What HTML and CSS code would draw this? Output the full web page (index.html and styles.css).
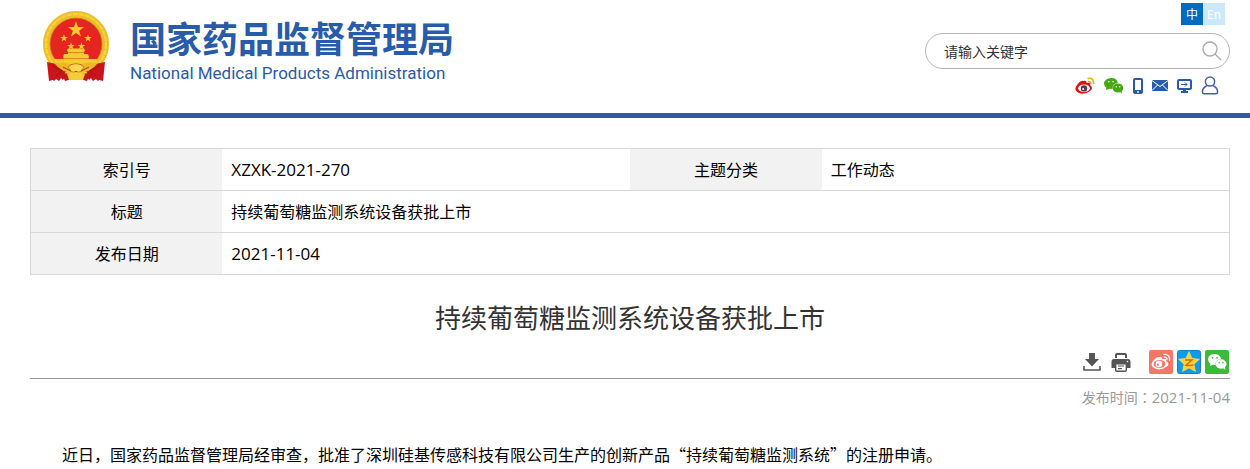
FILE: index.html
```
<!DOCTYPE html>
<html lang="zh-CN">
<head>
<meta charset="utf-8">
<title>持续葡萄糖监测系统设备获批上市</title>
<link rel="stylesheet" href="styles.css">
</head>
<body>
<header class="site-header">
  <a class="brand" href="#">
    <svg class="emblem" viewBox="0 0 68 74" aria-hidden="true">
      <path d="M9 51L27 60L21 70L17 66L12 71L9 68Q10 58 9 51ZM59 51L41 60L47 70L51 66L56 71L59 68Q58 58 59 51Z" fill="#c3141b"/>
      <circle cx="34" cy="34" r="29.500" fill="#e52620" stroke="#efbd25" stroke-width="7"/>
      <circle cx="34" cy="34" r="30" fill="none" stroke="#f8d444" stroke-width="2" stroke-dasharray="5 1"/>
      <circle cx="34" cy="34" r="26" fill="none" stroke="#c8841a" stroke-width=".7"/>
      <g fill="#f3cd32">
        <path id="star" d="M34 11L35.900 17L42 17L37.100 20.700L39 26.600L34 23L29 26.600L30.900 20.700L26 17L32.100 17Z"/>
        <use href="#star" transform="translate(6 19) scale(.47)"/>
        <use href="#star" transform="translate(30 19) scale(.47)"/>
        <use href="#star" transform="translate(13 27) scale(.47)"/>
        <use href="#star" transform="translate(23.500 27) scale(.47)"/>
        <path d="M26 38.500H42L43 40.500L42 42V44H46L47 47L46 49H56L54 54H14L12 49H22L21 47L22 44H26V42L25 40.500Z"/>
      </g>
      <path d="M26 42.500H42M21 48.500H47" stroke="#d8781b" stroke-width=".8"/>
      <path d="M5 52L20 55L25 60L17 71L14 69L7 71ZM63 52L48 55L43 60L51 71L54 69L61 71Z" fill="#cb151b"/>
      <path d="M12 53Q25 51 34 57Q43 51 56 53Q47 64 34 63Q21 64 12 53Z" fill="#edb824"/>
      <path d="M26 57Q34 50 42 57L38 62H30Z" fill="#fbd94c" stroke="#ba6919" stroke-width=".7"/>
      <path d="M19 62Q27 66 34 61Q41 66 49 62L45 71Q34 67 23 71Z" fill="#c8141b"/>
      <path d="M25 64Q34 60 43 64L41 70H27Z" fill="#f5cd39"/>
      <path d="M10 56L20 61L14 66M58 56L48 61L54 66M21 57L29 61M47 57L39 61" fill="none" stroke="#8f1015" stroke-width=".8"/>
    </svg>
    <span class="brand-text">
      <span class="brand-zh">国家药品监督管理局</span>
      <span class="brand-en">National Medical Products Administration</span>
    </span>
  </a>
  <div class="tools">
    <nav class="languages" aria-label="语言">
      <a class="language language-active" href="#">中</a>
      <a class="language" href="#">En</a>
    </nav>
    <form class="search">
      <input class="search-input" type="text" placeholder="请输入关键字" aria-label="请输入关键字">
      <button class="search-button" type="button" aria-label="搜索">
        <svg width="22" height="22" viewBox="0 0 22 22" fill="none" stroke="#aaa" stroke-width="1.300"><circle cx="9" cy="9" r="7"/><path d="M14 14L20 20"/></svg>
      </button>
    </form>
    <nav class="channels" aria-label="渠道">
      <a href="#" aria-label="微博"><svg width="20" height="18" viewBox="0 0 20 18"><path d="M8.500 4Q12 3 11.500 6Q16 5 15 8Q19 11 15 14Q10 18 4 16Q-2 13 2 8Q6 3 8.500 4Z" fill="#e60d12"/><ellipse cx="9" cy="11.300" rx="5.800" ry="3.900" fill="#fff"/><circle cx="9" cy="11.400" r="3.200" fill="#444"/><circle cx="8.200" cy="12" r="1" fill="#fff"/><path d="M12.500 1.500Q19 0 18.500 7M13 4.500Q16 4 15.700 7" fill="none" stroke="#f1ac12" stroke-width="1.600"/></svg></a>
      <a href="#" aria-label="微信"><svg width="20" height="18" viewBox="0 0 20 18"><path d="M7.500 1C3 1 0 4 0 6.500Q0 9 2.300 10.700L2 13L5.600 11.700L8.500 12Q8 7 13.800 6Q13 1 7.500 1Z" fill="#47a812"/><ellipse cx="14" cy="11" rx="5.300" ry="4.500" fill="#47a812"/><path d="M15 14L18 16.500L17.500 13Z" fill="#47a812"/><g fill="#fff"><circle cx="4.800" cy="4.700" r=".8"/><circle cx="9.100" cy="4.700" r=".8"/><circle cx="12.300" cy="9.800" r=".7"/><circle cx="15.700" cy="9.800" r=".7"/></g></svg></a>
      <a href="#" aria-label="移动版"><svg width="10" height="16" viewBox="0 0 10 16"><rect width="10" height="16" rx="2" fill="#285caa"/><path d="M2 2H8V12H2Z" fill="#fff"/><circle cx="5" cy="14" r=".9" fill="#fff"/></svg></a>
      <a href="#" aria-label="邮箱"><svg width="16" height="11" viewBox="0 0 16 11"><path d="M0 0H16V11H0Z" fill="#285caa"/><path d="M0 .5L8 6.500L16 .5M0 10.500L5.500 5M16 10.500L10.500 5" fill="none" stroke="#fff"/></svg></a>
      <a href="#" aria-label="电脑版"><svg width="15" height="14" viewBox="0 0 15 14"><rect x="1" y="1" width="13" height="9" rx="1" fill="#fff" stroke="#285caa" stroke-width="2"/><path d="M6 10H9V12H11V14H4V12H6Z" fill="#285caa"/><path d="M4 5.500H10M8 3.500L10 5.500L8 7.500" fill="none" stroke="#285caa"/></svg></a>
      <a href="#" aria-label="个人中心"><svg width="18" height="19" viewBox="0 0 18 19" fill="none" stroke="#4561ae" stroke-width="1.500"><circle cx="9" cy="5.500" r="4.600"/><path d="M6 9.500C3 11 1.400 13 1.400 16Q1.400 17.800 3 17.800H15Q16.600 17.800 16.600 16C16.600 13 15 11 12 9.500"/></svg></a>
    </nav>
  </div>
</header>
<main class="content">
  <table class="record">
    <tr><th scope="row">索引号</th><td class="latin">XZXK-2021-270</td><th scope="row">主题分类</th><td>工作动态</td></tr>
    <tr><th scope="row">标题</th><td colspan="3">持续葡萄糖监测系统设备获批上市</td></tr>
    <tr><th scope="row">发布日期</th><td class="latin" colspan="3">2021-11-04</td></tr>
  </table>
  <article>
    <h1 class="title">持续葡萄糖监测系统设备获批上市</h1>
    <div class="actions">
      <button class="action" type="button" aria-label="下载"><svg width="18" height="18" viewBox="0 0 18 18"><path d="M6 0H12V6H16L9 13.500L2 6H6Z" fill="#555"/><path d="M1 13V17H17V13" fill="none" stroke="#555" stroke-width="1.600"/></svg></button>
      <button class="action" type="button" aria-label="打印"><svg width="20" height="19" viewBox="0 0 20 19"><path d="M4 5V2Q4 0 6 0H14Q16 0 16 2V5" fill="#555"/><path d="M6 2H14V5H6Z" fill="#fff"/><path d="M3 6H17Q19.500 6 19.500 9V15H16V11H4V15H.5V9Q.5 6 3 6Z" fill="#555"/><rect x="4.700" y="10.700" width="10.600" height="7.600" rx="1" fill="#fff" stroke="#555" stroke-width="1.400"/><path d="M7 13H13M7 15.700H11" stroke="#555" stroke-width="1.200"/><circle cx="16.500" cy="8.500" r=".8" fill="#fff"/></svg></button>
      <div class="shares">
        <a href="#" aria-label="分享到微博"><svg width="24" height="24" viewBox="0 0 24 24"><rect width="24" height="24" rx="2" fill="#f57566"/><path d="M10 7Q13 6 13 9Q18 8 17 11Q22 14 17 17Q12 21 6 18.500Q0 16 4 11Q7 7 10 7Z" fill="#fff"/><ellipse cx="10.500" cy="14" rx="6" ry="4" fill="#f57566"/><circle cx="10" cy="14" r="3.300" fill="#fff"/><circle cx="9" cy="14.700" r="1.100" fill="#f57566"/><path d="M14.500 4.500Q21.500 4 20.500 11M15 7.200Q18.500 7 17.900 10" fill="none" stroke="#fff" stroke-width="1.300"/></svg></a>
        <a href="#" aria-label="分享到QQ空间"><svg width="24" height="24" viewBox="0 0 24 24"><rect x=".5" y=".5" width="23" height="23" rx="2" fill="#109be9" stroke="#1680c5"/><path d="M12 1.500L15 8.300L22.500 9.200L17 14.200L18.500 21.500L12 18L5.500 21.500L7 14.200L1.500 9.200L9 8.300Z" fill="#ffd12c" stroke="#ffe675" stroke-width=".5"/><path d="M8 10H15L9 15.200Q13 16 16.500 14.800" fill="none" stroke="#d66b08" stroke-width="1.400"/></svg></a>
        <a href="#" aria-label="分享到微信"><svg width="24" height="24" viewBox="0 0 24 24"><rect width="24" height="24" rx="2" fill="#3bbb3c"/><path d="M9.500 4C5 4 3 7 3 9.500Q3 12 5.500 13.700L5 16L7.700 14.700L10.500 15Q10 10 16 9Q15 4 9.500 4Z" fill="#fff"/><ellipse cx="16" cy="14" rx="5.500" ry="4.700" fill="#fff"/><path d="M17 17.500L20.500 20L19.500 16Z" fill="#fff"/><g fill="#3bbb3c"><circle cx="7.500" cy="7.800" r=".9"/><circle cx="12" cy="7.800" r=".9"/><circle cx="14.300" cy="12.800" r=".8"/><circle cx="17.900" cy="12.800" r=".8"/></g></svg></a>
      </div>
    </div>
    <p class="published">发布时间<span class="centered-mark" lang="zh-TW">：</span><time class="published-date" datetime="2021-11-04">2021-11-04</time></p>
    <p class="body-text">近日，国家药品监督管理局经审查，批准了深圳硅基传感科技有限公司生产的创新产品“持续葡萄糖监测系统”的注册申请。</p>
  </article>
</main>
</body>
</html>
```
FILE: styles.css
```
* { box-sizing: border-box; }
body {
  margin: 0;
  background: #fff;
  color: #000;
  font: 16px/24px "Noto Sans CJK SC", sans-serif;
}
a { color: inherit; text-decoration: none; }
svg { display: block; }
button { padding: 0; border: 0; background: none; cursor: pointer; }

.site-header {
  display: flex;
  justify-content: space-between;
  align-items: flex-start;
  padding: 3px 20px 17px 42px;
  border-bottom: 5px solid #285caa;
}
.brand { display: flex; gap: 20px; padding-top: 7px; color: #285caa; }
.emblem { width: 68px; height: 74px; }
.brand-text { display: flex; flex-direction: column; gap: 4px; padding-top: 6px; white-space: nowrap; }
.brand-zh { font-size: 36px; line-height: 42px; font-weight: 700; }
.brand-en { font: 17px/22px Roboto, Arial, sans-serif; }

.tools { display: flex; flex-direction: column; width: 305px; }
.languages { display: flex; justify-content: flex-end; padding-right: 5px; }
.language {
  width: 22px;
  height: 22px;
  background: #cce8ff;
  color: #fff;
  font-size: 12px;
  line-height: 22px;
  text-align: center;
}
.language-active { background: #006cbe; }
.search {
  display: flex;
  align-items: center;
  height: 36px;
  margin: 8px 0 6px;
  padding: 0 6px 0 18px;
  border: 1px solid #b5b5b5;
  border-radius: 18px;
}
.search-input {
  flex: 1;
  min-width: 0;
  padding: 0;
  border: 0;
  outline: 0;
  background: none;
  font: 14px/20px "Noto Sans CJK SC", sans-serif;
}
.search-input::placeholder { color: #333; opacity: 1; }
.channels {
  display: flex;
  justify-content: flex-end;
  align-items: center;
  gap: 9px;
  height: 21px;
  padding-right: 11px;
}

.content { padding: 30px 20px 0 30px; }
.record {
  width: 100%;
  border: 1px solid #d8d8d8;
  border-collapse: collapse;
  table-layout: fixed;
}
.record tr { border-bottom: 1px solid #d8d8d8; }
.record th { width: 16%; padding: 8px 9px 9px; background: #f2f2f2; font-weight: 400; text-align: center; }
.record td { width: 34%; padding: 8px 9px 9px; }
.record .latin { padding: 9px 9px 8px; font: 17px/24px "Open Sans", sans-serif; }

.title {
  margin: 23px 0 13px;
  color: #333;
  font-size: 26px;
  line-height: 38px;
  font-weight: 400;
  text-align: center;
}
.actions {
  display: flex;
  justify-content: flex-end;
  align-items: center;
  gap: 10px;
  padding: 1px 1px 4px 0;
  border-bottom: 1px solid #999;
}
.shares { display: flex; gap: 4px; margin-left: 8px; }
.published {
  margin: 6px 0 33px;
  color: #999;
  font-size: 14px;
  line-height: 24px;
  text-align: right;
}
.published-date { font: 15px/24px "Open Sans", sans-serif; }
.centered-mark { font-family: "Noto Sans CJK TC", sans-serif; }
.body-text { margin: 0; text-indent: 2em; }
```
